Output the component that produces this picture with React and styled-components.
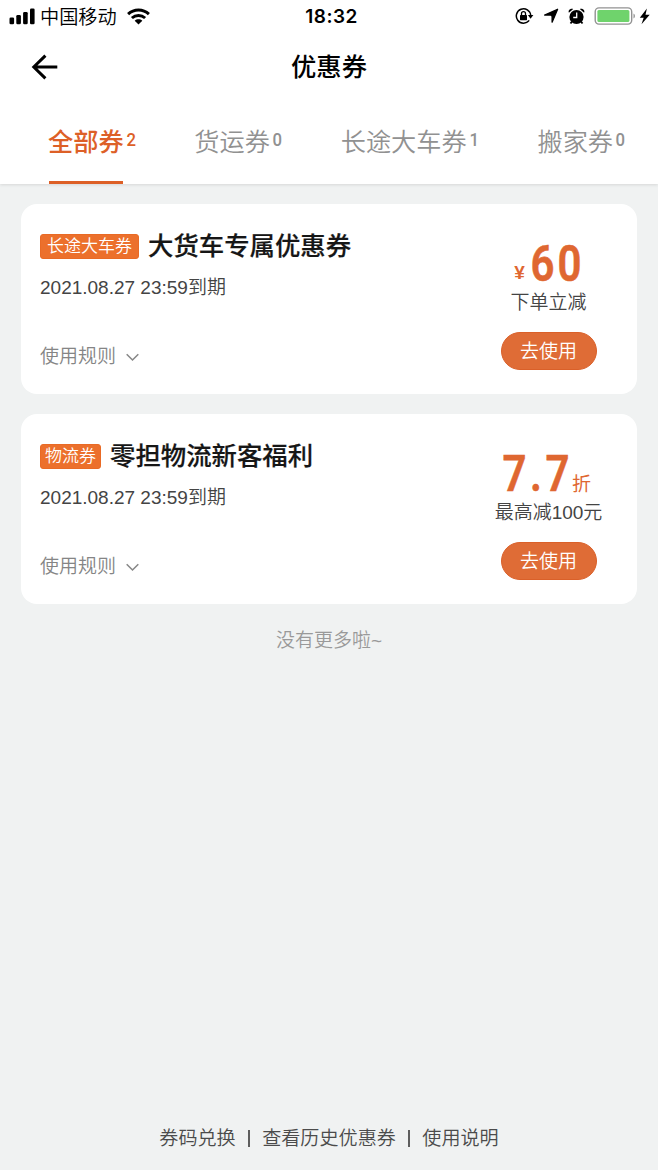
import React from "react";
import styled, { createGlobalStyle } from "styled-components";

const GlobalStyle = createGlobalStyle`
  * { box-sizing: border-box; }
  body {
    margin: 0;
    background: #f0f2f2;
    font-family: "Liberation Sans", "Noto Sans CJK SC", sans-serif;
    font-weight: 350;
    color: #444;
  }
  button {
    font: inherit;
    color: inherit;
    background: none;
    border: 0;
    padding: 0;
    margin: 0;
  }
`;

const Screen = styled.div`
  width: 658px;
  height: 1170px;
  display: flex;
  flex-direction: column;
  overflow: hidden;
`;

const Header = styled.header`
  background: #fff;
  height: 184px;
  flex: none;
  display: flex;
  flex-direction: column;
  box-shadow: 0 1px 3px rgba(0, 0, 0, 0.11);
`;

const StatusBar = styled.div`
  height: 33px;
  display: grid;
  grid-template-columns: 1fr auto 1fr;
  align-items: center;
  padding: 0 8px 0 9px;
  color: #000;
`;

const StatusGroup = styled.div`
  display: flex;
  align-items: center;
  justify-content: ${(p) => (p.$end ? "flex-end" : "flex-start")};
  padding-bottom: ${(p) => (p.$end ? 1 : 0)}px;
`;

const IconRow = styled.div`
  display: flex;
  align-items: center;
  gap: ${(p) => p.$gap}px;
`;

const Carrier = styled.span`
  font-size: 19.2px;
  line-height: 31px;
  padding-top: 2px;
  margin: 0 10px 0 5px;
`;

const Clock = styled.span`
  font-family: Inter, sans-serif;
  font-size: 19px;
  font-weight: 600;
  letter-spacing: 0.45px;
  line-height: 32px;
  padding-left: 4px;
`;

const NavBar = styled.div`
  height: 68px;
  display: grid;
  grid-template-columns: 1fr auto 1fr;
  align-items: center;
  padding: 0 31px;
`;

const BackButton = styled.button`
  width: 28px;
  height: 28px;
  display: flex;
`;

const Title = styled.h1`
  margin: 0;
  font-size: 25.3px;
  font-weight: 500;
  line-height: 34px;
  color: #000;
`;

const Tabs = styled.nav`
  flex: 1;
  display: flex;
  gap: 57.8px;
  padding-left: 48px;
`;

const Tab = styled.button`
  display: flex;
  flex-direction: column;
  justify-content: space-between;
  align-items: flex-start;
  padding-top: 24px;
  color: ${(p) => (p.$active ? "#dd6027" : "#919191")};
  font-weight: ${(p) => (p.$active ? 500 : 350)};
`;

const TabLabel = styled.span`
  display: flex;
  align-items: flex-start;
  font-size: 25.2px;
  line-height: 34px;
  white-space: nowrap;
`;

const Count = styled.span`
  width: 13px;
  padding-left: 2px;
  font-family: Roboto, sans-serif;
  font-size: 19px;
  font-weight: 500;
  line-height: 30px;
  text-align: left;
  transform: scaleX(0.88);
`;

const Underline = styled.span`
  width: 74px;
  height: 3px;
  margin-left: 1px;
  background: ${(p) => (p.$active ? "#dd6027" : "transparent")};
`;

const List = styled.main`
  flex: 1;
  display: flex;
  flex-direction: column;
  gap: 20px;
  padding: 20px 21px 0;
`;

const Card = styled.article`
  height: 190px;
  display: flex;
  justify-content: space-between;
  background: #fff;
  border-radius: 16px;
  padding: 0 19px;
`;

const Info = styled.div`
  display: flex;
  flex-direction: column;
  align-items: flex-start;
  padding-top: 25px;
`;

const Heading = styled.div`
  display: flex;
  align-items: center;
  gap: 9px;
  height: 34px;
`;

const Tag = styled.span`
  height: 25px;
  margin-top: 1px;
  padding: 0 ${(p) => p.$pad}px;
  background: #ec702c;
  border: 1px solid #e96a25;
  border-radius: 3px;
  color: #fff;
  font-size: 17px;
  line-height: 24px;
`;

const CouponName = styled.h2`
  margin: 0;
  font-size: 25.4px;
  font-weight: 500;
  line-height: 34px;
  color: #161616;
  -webkit-text-stroke: 0.2px #161616;
`;

const Expiry = styled.div`
  margin-top: 11px;
  font-size: 19px;
  line-height: 28px;
`;

const Rules = styled.button`
  margin-top: 41px;
  display: flex;
  align-items: center;
  gap: 10px;
  font-size: 19px;
  line-height: 28px;
  color: #858585;
`;

const Offer = styled.div`
  width: 139px;
  display: flex;
  flex-direction: column;
  align-items: center;
  padding-top: 36px;
`;

const Amount = styled.div`
  height: 48px;
  display: flex;
  align-items: baseline;
  justify-content: center;
  color: #df6731;
`;

const Digit = styled.span`
  width: ${(p) => p.$w}px;
  display: flex;
  justify-content: center;
  font-family: Roboto, sans-serif;
  font-size: 50px;
  font-weight: 600;
  line-height: 48px;
  transform: scaleX(0.84);
  -webkit-text-stroke: 0.6px #df6731;
`;

const Unit = styled.span`
  font-size: 19px;
  font-family: ${(p) => (p.$currency ? '"Liberation Sans"' : '"Noto Sans CJK SC"')}, sans-serif;
  font-weight: ${(p) => (p.$currency ? 700 : 400)};
  margin: ${(p) => (p.$currency ? "0 4px 0 0" : "0 4px 0 2px")};
  transform: translateY(${(p) => (p.$currency ? -2 : 0)}px);
`;

const Note = styled.div`
  font-size: 19px;
  line-height: 28px;
  padding-top: 1px;
  white-space: nowrap;
`;

const UseButton = styled.button`
  width: 96px;
  height: 38px;
  margin-top: 15px;
  padding-top: 1px;
  border: 1px solid #da6029;
  border-radius: 19px;
  background: #df6c36;
  color: #fff;
  font-size: 19px;
  line-height: 35px;
`;

const EndText = styled.p`
  margin: 3px 0 0;
  text-align: center;
  font-size: 19px;
  line-height: 28px;
  color: #999;
`;

const Footer = styled.footer`
  height: 45px;
  display: flex;
  align-items: flex-start;
  justify-content: center;
  font-size: 19.1px;
  line-height: 28px;
  color: #4b4b4b;
`;

const Divider = styled.span`
  width: 1.5px;
  height: 17px;
  margin: 5px 12.5px 0;
  background: #5e5e5e;
`;

const SignalIcon = () => (
  <svg width="26" height="17" viewBox="0 0 26 17">
    <rect x="0.5" y="9.5" width="4.6" height="6.8" rx="1.3" />
    <rect x="7.3" y="7" width="4.6" height="9.3" rx="1.3" />
    <rect x="14.1" y="4" width="4.6" height="12.3" rx="1.3" />
    <rect x="21" y="0.5" width="4.6" height="15.8" rx="1.3" />
  </svg>
);

const WifiIcon = () => (
  <svg width="23" height="17" viewBox="0 0 23 17" fill="none" stroke="#000" strokeWidth="3">
    <path d="M1.1 6.1C7 .6 16 .6 21.9 6.1" />
    <path d="M4.9 10C8.7 6.6 14.3 6.6 18.1 10" />
    <path d="M7.7 12.7C9.9 10.8 13.1 10.8 15.3 12.7L11.5 16.4Z" fill="#000" stroke="none" />
  </svg>
);

const LockIcon = () => (
  <svg width="19" height="18" viewBox="0 0 19 18" fill="none" stroke="#000">
    <path d="M14.2 13.4A7.2 7.2 0 1 1 15.7 8.3" strokeWidth="1.5" />
    <path d="M12.9 8H18.4L15.6 11.8Z" fill="#000" stroke="none" />
    <rect x="5" y="8" width="7" height="5.2" rx="0.6" fill="#000" stroke="none" />
    <path d="M6.5 8.4V6.6a2 2 0 0 1 4 0V8.4" strokeWidth="1.3" />
  </svg>
);

const LocationIcon = () => (
  <svg width="16" height="16" viewBox="0 0 16 16">
    <path
      d="M14.6 1.3 9.1 14.2V8.3L7.9 7.1H1.600Z"
      stroke="#000"
      strokeWidth="1.300"
      strokeLinejoin="round"
    />
  </svg>
);

const AlarmIcon = () => (
  <svg width="17" height="17" viewBox="0 0 17 17">
    <path d="M.9 4.800C.1 3.300.8 1.300 3 .8c1-.2 1.700 0 2.200.3ZM16.100 4.800C16.900 3.300 16.200 1.300 14 .8c-1-.2-1.700 0-2.200.3Z" />
    <circle cx="8.500" cy="9" r="7.100" />
    <path d="m4 13.500-1.500 2M13 13.500l1.500 2" stroke="#000" strokeWidth="1.800" />
    <path d="M8.700 4.500V9.500H5.200" fill="none" stroke="#fff" strokeWidth="1.300" />
  </svg>
);

const BatteryIcon = () => (
  <svg width="42" height="18" viewBox="0 0 42 18">
    <rect x="1.200" y="0.900" width="36.500" height="16.200" rx="3.800" fill="#fff" stroke="#929292" strokeWidth="1.400" />
    <rect x="3.400" y="3" width="32" height="12" rx="1.500" fill="#6fd36c" />
    <path d="M39.500 6.500c1.900.8 1.900 4.200 0 5Z" fill="#929292" />
  </svg>
);

const BoltIcon = () => (
  <svg width="11" height="17" viewBox="0 0 11 17">
    <path d="M7.900.5.800 9.700H4.700L2.500 16.300 10.700 6.700H6.500Z" />
  </svg>
);

const ArrowIcon = () => (
  <svg width="28" height="28" viewBox="0 0 28 28" fill="none" stroke="#000" strokeWidth="3">
    <path d="M14.400 2.600 2.800 14 14.400 25.400M3 14H26.300" />
  </svg>
);

const ChevronIcon = () => (
  <svg width="13" height="9" viewBox="0 0 13 9" fill="none" stroke="#888" strokeWidth="1.600">
    <path d="M.700 1.300 6.500 7 12.300 1.300" />
  </svg>
);

const tabs = [
  { label: "全部券", count: 2, active: true },
  { label: "货运券", count: 0 },
  { label: "长途大车券", count: 1 },
  { label: "搬家券", count: 0 },
];

const coupons = [
  { tag: "长途大车券", pad: 6, name: "大货车专属优惠券", currency: "¥", value: "60", note: "下单立减" },
  { tag: "物流券", pad: 4, name: "零担物流新客福利", value: "7.7", unit: "折", note: "最高减100元" },
];

const digitWidth = (char, isDiscount) => {
  if (!isDiscount) return 27;
  return char === "." ? 18 : 25;
};

const Coupon = ({ tag, pad, name, currency, value, unit, note }) => (
  <Card>
    <Info>
      <Heading>
        <Tag $pad={pad}>{tag}</Tag>
        <CouponName>{name}</CouponName>
      </Heading>
      <Expiry>2021.08.27 23:59到期</Expiry>
      <Rules>
        使用规则
        <ChevronIcon />
      </Rules>
    </Info>
    <Offer>
      <Amount>
        {currency && <Unit $currency>{currency}</Unit>}
        {value.split("").map((c, i) => (
          <Digit key={i} $w={digitWidth(c, Boolean(unit))}>{c}</Digit>
        ))}
        {unit && <Unit>{unit}</Unit>}
      </Amount>
      <Note>{note}</Note>
      <UseButton>去使用</UseButton>
    </Offer>
  </Card>
);

export default function App() {
  return (
    <Screen>
      <GlobalStyle />
      <Header>
        <StatusBar>
          <StatusGroup>
            <SignalIcon />
            <Carrier>中国移动</Carrier>
            <WifiIcon />
          </StatusGroup>
          <Clock>18:32</Clock>
          <StatusGroup $end>
            <IconRow $gap={3}>
              <IconRow $gap={9}>
                <LockIcon />
                <LocationIcon />
                <AlarmIcon />
                <BatteryIcon />
              </IconRow>
              <BoltIcon />
            </IconRow>
          </StatusGroup>
        </StatusBar>
        <NavBar>
          <BackButton aria-label="返回">
            <ArrowIcon />
          </BackButton>
          <Title>优惠券</Title>
        </NavBar>
        <Tabs>
          {tabs.map((t) => (
            <Tab key={t.label} $active={t.active}>
              <TabLabel>
                {t.label}
                <Count>{t.count}</Count>
              </TabLabel>
              <Underline $active={t.active} />
            </Tab>
          ))}
        </Tabs>
      </Header>
      <List>
        {coupons.map((c) => (
          <Coupon key={c.name} {...c} />
        ))}
        <EndText>没有更多啦~</EndText>
      </List>
      <Footer>
        <span>券码兑换</span>
        <Divider />
        <span>查看历史优惠券</span>
        <Divider />
        <span>使用说明</span>
      </Footer>
    </Screen>
  );
}
